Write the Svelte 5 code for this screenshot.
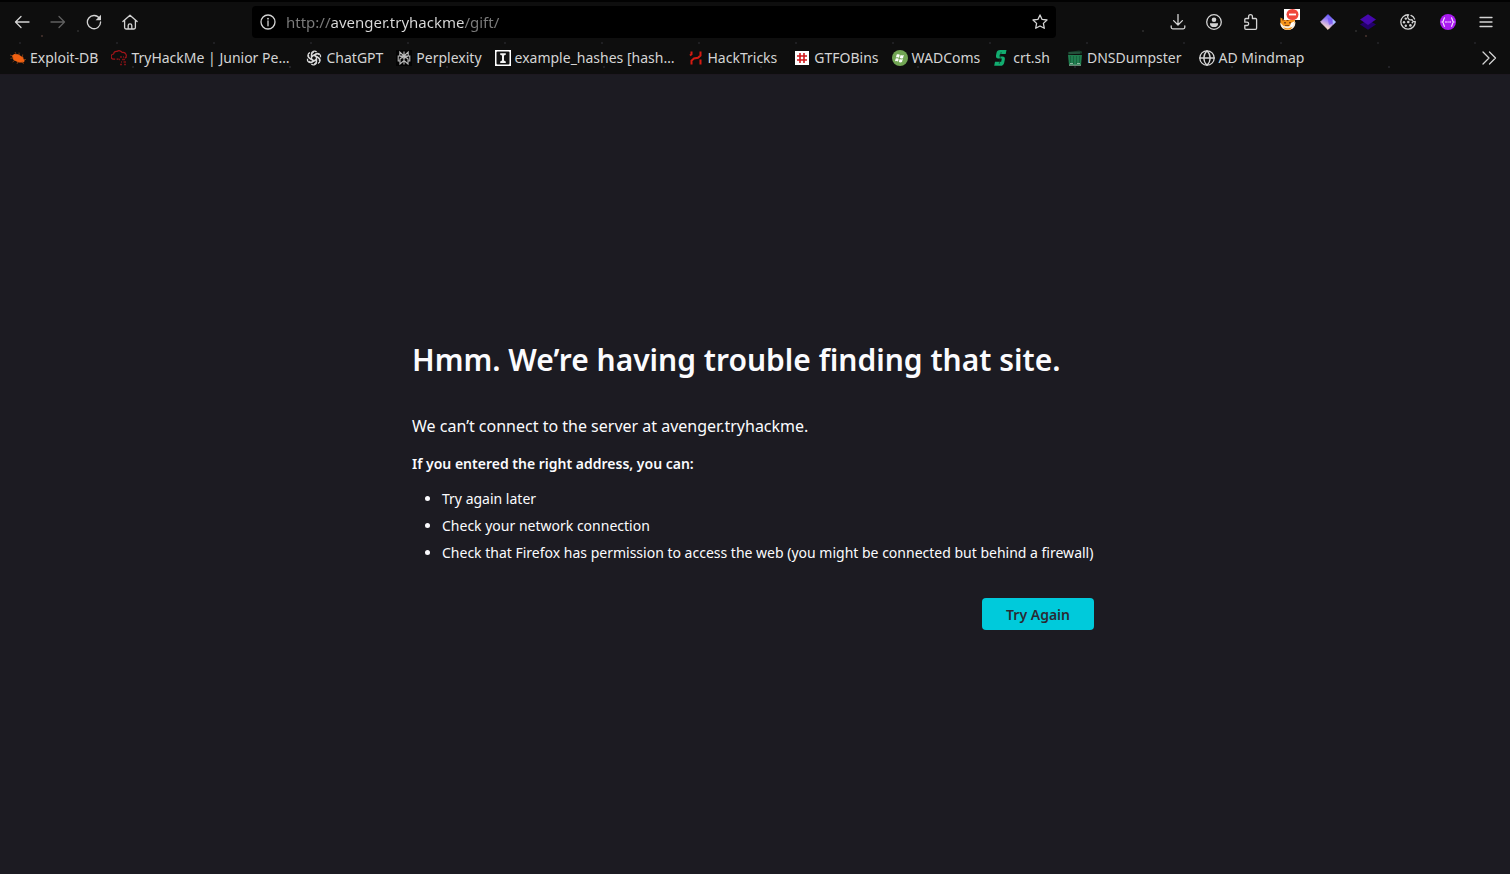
<script>
    let url = $state('http://avenger.tryhackme/gift/');

    const bookmarks = [
        { icon: 'exploit', label: 'Exploit-DB' },
        { icon: 'thm', label: 'TryHackMe | Junior Pe…', roomy: true },
        { icon: 'gpt', label: 'ChatGPT' },
        { icon: 'perplexity', label: 'Perplexity' },
        { icon: 'hashes', label: 'example_hashes [hash…' },
        { icon: 'hacktricks', label: 'HackTricks', roomy: true },
        { icon: 'gtfo', label: 'GTFOBins' },
        { icon: 'wad', label: 'WADComs' },
        { icon: 'crt', label: 'crt.sh', roomy: true },
        { icon: 'dns', label: 'DNSDumpster', roomy: true },
        { icon: 'globe', label: 'AD Mindmap' }
    ];

    const navButtons = [
        { icon: 'back', label: 'Back' },
        { icon: 'forward', label: 'Forward', disabled: true },
        { icon: 'reload', label: 'Reload' },
        { icon: 'home', label: 'Home' }
    ];

    const tools = [
        { icon: 'download', label: 'Downloads' },
        { icon: 'account', label: 'Account' },
        { icon: 'puzzle', label: 'Extensions' },
        { icon: 'fox', label: 'FoxyProxy', ext: true },
        { icon: 'diamond', label: 'Hack-Tools', ext: true },
        { icon: 'layers', label: 'Wappalyzer', ext: true },
        { icon: 'cookie', label: 'Cookie-Editor', ext: true },
        { icon: 'badge', label: 'User agent', ext: true },
        { icon: 'menu', label: 'Menu' }
    ];

    const tips = [
        'Try again later',
        'Check your network connection',
        'Check that Firefox has permission to access the web (you might be connected but behind a firewall)'
    ];
</script>

{#snippet icon(name)}
    <svg class="icon" viewBox="0 0 16 16" aria-hidden="true">
        {#if name === 'back'}
            <path class="line" d="M15 8H1.5M7 2.5 1.5 8 7 13.5" />
        {:else if name === 'forward'}
            <path class="line" d="M1 8h13.5M9 2.5 14.5 8 9 13.5" />
        {:else if name === 'reload'}
            <path class="line" d="M13.6 4.6A6.6 6.6 0 1 0 14.6 8" />
            <path d="M15 .8v5.4H9.6z" fill="currentColor" />
        {:else if name === 'home'}
            <path class="line" d="M.9 7.6 8 1.2l7.1 6.4M2.6 6.4v7.2c0 .9.5 1.4 1.4 1.4h8c.9 0 1.4-.5 1.4-1.4V6.4M6.2 15v-3.6c0-.9.6-1.5 1.8-1.5s1.8.6 1.8 1.5V15" />
        {:else if name === 'info'}
            <circle class="line" cx="8" cy="8" r="7" />
            <path class="line" d="M8 7v4.8" />
            <circle cx="8" cy="4.7" r=".9" fill="currentColor" />
        {:else if name === 'star'}
            <path class="line" d="m8 .9 2.1 4.5 4.9.6-3.6 3.4.9 4.9L8 12l-4.3 2.3.9-4.9L1 6l4.9-.6z" />
        {:else if name === 'download'}
            <path class="line" d="M8 .5v10.3M3.6 6.6 8 11l4.4-4.4M1.2 11.8v1.5c0 1 .6 1.5 1.5 1.5h10.6c.9 0 1.5-.5 1.5-1.5v-1.5" />
        {:else if name === 'account'}
            <circle class="line" cx="8" cy="8" r="7.3" />
            <circle cx="8" cy="5.8" r="2.3" fill="currentColor" />
            <path d="M4 9.2h8v.7a4 3.1 0 0 1-8 0z" fill="currentColor" />
        {:else if name === 'puzzle'}
            <path class="line" d="M6.6 4.5V2.6a1.9 1.9 0 0 1 3.8 0v1.9h3.1c.7 0 1.1.4 1.1 1.1v8.6c0 .7-.4 1.1-1.1 1.1H3.9c-.7 0-1.1-.4-1.1-1.1v-2.7H5a1.6 1.6 0 0 0 0-3.3H2.8V5.6c0-.7.4-1.1 1.1-1.1z" />
        {:else if name === 'fox'}
            <path d="M.5 3.5 3 5h9l3-1.5v6A7 6.5 0 0 1 8 16 7 6.5 0 0 1 .5 9.5z" fill="#f59419" />
            <path d="M.3 8.5 3.5 12 8 12.6l4-1.4 3.4-3.4c.2 5-2.8 8.2-7.5 8.2S.1 13 .3 8.5" fill="#f5eee4" />
            <path d="M3 13c2 1.6 7 1.6 9.5-.6L11 15a7 6 0 0 1-6 .3z" fill="#f59419" />
            <path d="M2 5h3v1.5H2zm2 3h2v1.5H4zm5 0h2v1.5H9zM6.5 6h2v1h-2zM5 11h4v1H5z" fill="#8c4710" />
            <path d="m11 9 4-2-3 6-2-1z" fill="#fff" />
        {:else if name === 'diamond'}
            <path d="M8 .6 15.4 8 8 15.4.6 8z" fill="url(#pastel)" stroke="url(#pastel)" stroke-linejoin="round" />
            <path d="m8 .2 7.8 7.8-2.6 2.8L12.6 5z" fill="#a9c2ff" />
            <path d="M7.5 3.5 12 5l.4 4.5L9 11z" fill="#6a4af2" opacity=".6" />
        {:else if name === 'layers'}
            <path d="m0 10.5 8-4.8 8 4.8-8 5.3z" fill="#24006c" />
            <path d="m0 5.6 8-5.4 8 5.4L8 11z" fill="#4608ad" />
        {:else if name === 'cookie'}
            <path class="line" d="M8.6.8A7.2 7.2 0 1 0 15.2 7.4 2.2 2.2 0 0 1 12 5.6 3 3 0 0 1 8.6.8z" />
            <path class="line" d="M11 1.4a7 7 0 0 1 3.6 3.6" />
            <g fill="currentColor">
                <circle cx="5.8" cy="4.6" r="1.2" /><circle cx="4" cy="8.2" r="1.2" />
                <circle cx="8.3" cy="8" r="1.3" /><circle cx="5.8" cy="11.8" r="1.2" />
                <circle cx="10.4" cy="11.4" r="1.3" /><circle cx="12.4" cy="8.6" r=".9" />
            </g>
        {:else if name === 'badge'}
            <circle cx="8" cy="8" r="8" fill="#a91bf0" />
            <path d="M5 3.6C3.2 3.6 4.2 7.4 2.4 8 4.2 8.6 3.2 12.4 5 12.4M11 3.6c1.8 0 .8 3.8 2.6 4.4-1.8.6-.8 4.4-2.6 4.4" fill="none" stroke="#f6dcff" stroke-width="1.2" />
            <path d="M5.2 8h1.5m.8 0h1.1m.8 0h1.5" stroke="#f6dcff" stroke-width="1.3" />
        {:else if name === 'menu'}
            <path class="line" d="M2 3.5h12M2 8h12M2 12.5h12" />
        {:else if name === 'more'}
            <path class="line" d="m2 2 6 6-6 6m6.5-12 6 6-6 6" />
        {:else if name === 'exploit'}
            <path d="M2 5.8 4.2 4l4 .2 4.6 3 2 3.8-1.6 1.6-4.5-.2L3.5 10z" fill="#f26111" />
            <path d="m5 2 1.5 3M9 2.6l.3 2.2M0 5l3 1M.4 8.3 4 8M2.6 12l2.6-2M7 14l1-3m4.5-4 .2-2.5M13 9.5h3M12 11l1.6 3" stroke="#b5551a" stroke-width=".6" />
        {:else if name === 'thm'}
            <path d="M4.2 9.2H3A2.6 2.6 0 0 1 2.6 4 3.1 3.1 0 0 1 6 1.4a3.6 3.6 0 0 1 5.2 1.1 3.2 3.2 0 0 1 2.7 5.7M5.6 9.2h2" fill="none" stroke="#a01419" stroke-width="1.2" />
            <path d="M9 7h2m1 0h1m2 0h1M8 9.5h1m2 0h3M10 12h1m1.5 0H15M9 14.5h2m2 0h2" stroke="#7d1216" stroke-width="1.4" />
        {:else if name === 'gpt'}
            <g fill="none" stroke="#d7d7d7" stroke-width="1.3">
                {#each [0, 60, 120, 180, 240, 300] as angle}
                    <path d="M5.5 9.4V4.2A3 3 0 0 1 10.6 2M5.5 6.6 9.7 4.2a3 3 0 0 1 3.6.6" transform="rotate({angle} 8 8)" />
                {/each}
            </g>
        {:else if name === 'perplexity'}
            <rect width="16" height="16" fill="#030303" />
            <path d="M8 1.5v13M3.8 2v4L8 8.3 12.2 6V2L8 6zM2.2 6h11.6v5H12V9L8 6 4 9v2H2.2zM4 10v4l4-3.5 4 3.5v-4" fill="none" stroke="#bababa" stroke-width="1.1" />
        {:else if name === 'hashes'}
            <rect width="16" height="16" fill="#fff" />
            <rect x="1.5" y="1.5" width="13" height="13" rx="1" fill="#141414" />
            <path d="M5.2 3.2h5.6v1.6L9 5.6v4.8l1.8 1v1.6H5.2v-1.6l1.8-1V5.6l-1.8-.8z" fill="#f4f4f4" />
        {:else if name === 'hacktricks'}
            <path d="M3.5 1.5v2.8L2 5.5M12.5 1.5v4L10 7.8 6 8.4l-2.5 2.4v3.7M12.5 9.5v5" fill="none" stroke="#d51b12" stroke-width="2" />
        {:else if name === 'gtfo'}
            <rect x="1" y="1" width="14" height="14" fill="#fff" />
            <path d="M6 3v10m4-10v10M3 6h10M3 10h10" stroke="#cf191d" stroke-width="1.6" />
        {:else if name === 'wad'}
            <circle cx="8" cy="8" r="8" fill="#71a553" />
            <path d="M4.7 4.6c1.3-.7 2.2-.5 3.1.1l-.8 3c-1-.6-1.9-.7-3.1-.1zm3.9.4c1 .6 1.9.7 3.2.1L11 8.2c-1.2.6-2.2.5-3.2-.1zM3.7 8.6c1.2-.6 2.1-.5 3.1.1L6 11.6c-1-.6-1.8-.7-3.1-.1zm3.9.4c1 .6 1.9.7 3.2.1l-.8 3c-1.2.6-2.2.5-3.2-.1z" fill="#fff" />
        {:else if name === 'crt'}
            <path d="M13.5.1H7.2C5 .1 3.8 1.3 3.4 3.2L3 5.4c-.3 1.8.6 3 2.2 3h3.6l-.6 3.4H2l-.8 4h6.2c2.2 0 3.4-1.2 3.8-3.1l.6-3c.4-2-.5-3.1-2.3-3.1H6.4L7 4h5.7z" fill="#12ad70" />
            <path d="m8.2 2-2 12" stroke="#0b3324" stroke-width=".6" />
        {:else if name === 'dns'}
            <path d="m1 2 11-1.5 3 1v2L1 4.5z" fill="#173e2a" />
            <path d="M1 5h14l-1 10H2z" fill="#207e4f" />
            <path d="M3.5 6v8m3-8v8m3-8v8m3-8v8" stroke="#17643e" />
            <path d="M3 13.5h3m4 0h3M2 15.2h12" stroke="#8bb69d" />
            <path d="M2 3h11" stroke="#397155" stroke-width=".8" />
        {:else if name === 'globe'}
            <circle class="line" cx="8" cy="8" r="7.2" />
            <path class="line" d="M.8 8h14.4M8 .8C3.8 5 3.8 11 8 15.2 12.2 11 12.2 5 8 .8" />
        {/if}
    </svg>
{/snippet}

<svg class="defs" aria-hidden="true">
    <linearGradient id="pastel" x1="0.7" y1="0.1" x2="0.35" y2="0.9">
        <stop offset="0" stop-color="#6a5cff" />
        <stop offset="0.45" stop-color="#a58af5" />
        <stop offset="1" stop-color="#ffdccb" />
    </linearGradient>
</svg>

<div class="browser">
    <header class="chrome">
        <div class="toolbar">
            {#each navButtons as item}
                <button type="button" class="tool" title={item.label} aria-label={item.label} disabled={item.disabled}>
                    {@render icon(item.icon)}
                </button>
            {/each}

            <div class="spring"></div>
            <div class="urlbar">
                <button type="button" class="tool inner" aria-label="Site information">{@render icon('info')}</button>
                <input type="text" class="url" aria-label="Address" spellcheck="false" bind:value={url} />
                <button type="button" class="tool inner" aria-label="Bookmark this page">{@render icon('star')}</button>
            </div>
            <div class="spring"></div>

            {#each tools as item}
                <button type="button" class="tool" class:ext={item.ext} title={item.label} aria-label={item.label}>
                    {@render icon(item.icon)}
                    {#if item.icon === 'fox'}
                        <span class="blocked">
                            <svg viewBox="0 0 16 11" aria-hidden="true">
                                <ellipse cx="8.5" cy="5.5" rx="6" ry="5.5" fill="#f0463c" />
                                <path d="M5 5.5h7" stroke="#fff" stroke-width="1.8" />
                            </svg>
                        </span>
                    {/if}
                </button>
            {/each}
        </div>

        <nav class="bookmarks" aria-label="Bookmarks">
            {#each bookmarks as item}
                <a href="#{item.icon}" class="bookmark" class:roomy={item.roomy}>
                    {@render icon(item.icon)}
                    <span>{item.label}</span>
                </a>
            {/each}
            <button type="button" class="tool more" aria-label="More bookmarks">{@render icon('more')}</button>
        </nav>
    </header>

    <main class="page">
        <div class="error">
            <h1>Hmm. We’re having trouble finding that site.</h1>
            <p class="lead">We can’t connect to the server at avenger.tryhackme.</p>
            <p class="hint">If you entered the right address, you can:</p>
            <ul>
                {#each tips as tip}
                    <li>{tip}</li>
                {/each}
            </ul>
            <div class="actions">
                <button type="button" class="retry">Try Again</button>
            </div>
        </div>
    </main>
</div>

<style>
    :global(body) {
        margin: 0;
        background: #1c1b22;
    }

    .browser {
        min-height: 100vh;
        display: flex;
        flex-direction: column;
        font-family: "Noto Sans", "Open Sans", sans-serif;
        color: #fbfbfe;
    }

    .defs {
        position: absolute;
        width: 0;
        height: 0;
    }

    .icon {
        display: block;
        flex: none;
        width: 16px;
        height: 16px;
    }

    .line {
        fill: none;
        stroke: currentColor;
        stroke-width: 1.3;
        stroke-linecap: round;
        stroke-linejoin: round;
    }

    /* dark theme with a faint starfield */
    .chrome {
        border-top: 2px solid #020202;
        border-bottom: 1px solid #1d1820;
        background:
            radial-gradient(circle at 42px 34px, #3a2a26 0 1px, transparent 1px) 0 0 / 331px 74px,
            radial-gradient(circle at 78px 29px, #262626 0 1px, transparent 1px) 0 0 / 213px 74px,
            radial-gradient(circle at 133px 65px, #222226 0 1px, transparent 1px) 0 0 / 157px 74px,
            radial-gradient(circle at 20px 41px, #1f1f22 0 1px, transparent 1px) 0 0 / 97px 74px,
            #0e0e0e;
        color: #d4d4d4;
    }

    .toolbar {
        display: flex;
        align-items: center;
        height: 40px;
        padding: 0 6px 0 4px;
    }

    .tool {
        position: relative;
        display: flex;
        align-items: center;
        justify-content: center;
        flex: none;
        width: 36px;
        height: 32px;
        padding: 0;
        border: none;
        border-radius: 4px;
        background: none;
        color: inherit;
        cursor: pointer;
    }

    .tool:hover {
        background: #2a2a2a;
    }

    .tool:disabled {
        color: #606060;
        background: none;
    }

    .tool.ext {
        width: 40px;
    }

    .tool.inner {
        width: 32px;
    }

    .blocked {
        position: absolute;
        top: 3px;
        right: 8px;
        width: 16px;
        height: 11px;
        background: #fff;
    }

    .blocked svg {
        display: block;
    }

    .spring {
        flex: none;
        width: 104px;
    }

    .urlbar {
        display: flex;
        flex: 1;
        min-width: 0;
        border-radius: 4px;
        background: #000;
    }

    /* scheme and path are dimmed, the host is bright */
    .url {
        flex: 1;
        min-width: 0;
        padding: 0 2px;
        border: none;
        outline: none;
        background: linear-gradient(to right, #7c7c7c 46px, #dcdcdc 46px 180px, #7c7c7c 180px);
        background-clip: text;
        -webkit-background-clip: text;
        color: transparent;
        caret-color: #dcdcdc;
        font-family: inherit;
        font-size: 15px;
    }

    .bookmarks {
        display: flex;
        align-items: center;
        height: 32px;
        padding: 0 3px 0 4px;
    }

    .bookmark {
        display: flex;
        align-items: center;
        gap: 4px;
        padding: 0 7px 0 6px;
        color: inherit;
        font-size: 14px;
        line-height: 24px;
        text-decoration: none;
        white-space: nowrap;
    }

    .bookmark.roomy {
        padding-right: 11px;
    }

    .more {
        margin-left: auto;
    }

    .page {
        flex: 1;
        display: flex;
        align-items: center;
        justify-content: center;
        padding: 20px 48px 0;
    }

    .error {
        width: 100%;
        max-width: 686px;
    }

    h1 {
        margin: 0 0 32px;
        font-size: 30px;
        font-weight: 600;
        line-height: 42px;
    }

    .lead {
        margin: 0 0 12px;
        font-size: 16px;
        line-height: 26px;
    }

    .hint {
        margin: 0 0 8px;
        font-size: 14px;
        font-weight: 600;
        line-height: 26px;
    }

    ul {
        margin: 0;
        padding-left: 30px;
        font-size: 14px;
        line-height: 27px;
    }

    .actions {
        display: flex;
        justify-content: flex-end;
        padding: 32px 4px 0 0;
    }

    .retry {
        height: 32px;
        padding: 0 24px;
        border: none;
        border-radius: 4px;
        background: #00cadb;
        color: #2b2a33;
        font-family: inherit;
        font-size: 14px;
        font-weight: 600;
        cursor: pointer;
    }

    .retry:hover {
        background: #80ebff;
    }
</style>
